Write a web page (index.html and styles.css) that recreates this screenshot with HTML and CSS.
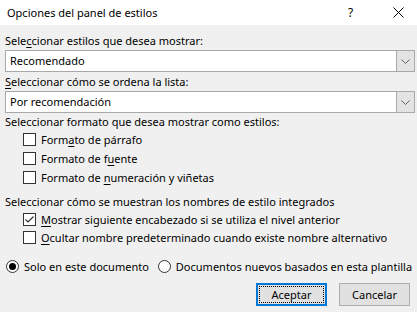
FILE: index.html
```html
<!DOCTYPE html>
<html lang="es">
<head>
<meta charset="utf-8">
<link rel="stylesheet" href="styles.css">
</head>
<body>
<div class="dialog">
  <div class="titlebar">
    <span class="title">Opciones del panel de estilos</span>
    <span class="help">?</span>
    <span class="close"><svg width="11" height="11" viewBox="0 0 11 11"><path d="M0.5 0.5L10.5 10.5M10.5 0.5L0.5 10.5" stroke="#000" stroke-width="1" fill="none"/></svg></span>
  </div>
  <div class="content">
    <div class="label l1">Sele<u>c</u>cionar estilos que desea mostrar:</div>
    <div class="combo">
      <span class="combo-text">Recomendado</span>
      <span class="combo-btn"><svg width="9" height="5" viewBox="0 0 9 5"><path d="M0.5 0.5L4.5 4.5L8.5 0.5" stroke="#606060" fill="none"/></svg></span>
    </div>
    <div class="label l2"><u>S</u>eleccionar cómo se ordena la lista:</div>
    <div class="combo">
      <span class="combo-text">Por recomendación</span>
      <span class="combo-btn"><svg width="9" height="5" viewBox="0 0 9 5"><path d="M0.5 0.5L4.5 4.5L8.5 0.5" stroke="#606060" fill="none"/></svg></span>
    </div>
    <div class="label l3">Seleccionar formato que desea mostrar como estilos:</div>
    <div class="checks c1">
      <div class="check-row"><span class="box"></span><span>Form<u>a</u>to de párrafo</span></div>
      <div class="check-row"><span class="box"></span><span>Formato de f<u>u</u>ente</span></div>
      <div class="check-row"><span class="box"></span><span>Formato de <u>n</u>umeración y viñetas</span></div>
    </div>
    <div class="label l4">Seleccionar cómo se muestran los nombres de estilo integrados</div>
    <div class="checks c2">
      <div class="check-row short"><span class="box"><svg width="11" height="11" viewBox="0 0 11 11"><path d="M1.5 5.5L4 8L9.5 2.5" stroke="#333" stroke-width="1.2" fill="none"/></svg></span><span><u>M</u>ostrar siguiente encabezado si se utiliza el nivel anterior</span></div>
      <div class="check-row short"><span class="box"></span><span><u>O</u>cultar nombre predeterminado cuando existe nombre alternativo</span></div>
    </div>
    <div class="radios">
      <div class="radio-item"><span class="radio on"></span><span>Solo en este documento</span></div>
      <div class="radio-item"><span class="radio"></span><span>Documentos nuevos basados en esta plantilla</span></div>
    </div>
    <div class="buttons">
      <button class="btn default"><span class="focus">Aceptar</span></button>
      <button class="btn">Cancelar</button>
    </div>
  </div>
</div>
</body>
</html>
```
FILE: styles.css
```css
html, body {
  margin: 0;
  padding: 0;
}
body {
  width: 417px;
  height: 312px;
  background: #f0f0f0;
  font-family: "Noto Sans", "Open Sans", sans-serif;
  font-size: 11px;
  color: #000;
  overflow: hidden;
}
.dialog {
  display: flex;
  flex-direction: column;
  width: 417px;
  height: 312px;
}
.titlebar {
  height: 25px;
  background: #fff;
  display: flex;
  align-items: center;
  padding-left: 7px;
  box-sizing: border-box;
}
.title {
  flex: 1;
  font-size: 11px;
  line-height: 16px;
}
.help {
  width: 10px;
  margin-right: 35px;
  font-size: 12px;
  line-height: 16px;
}
.close {
  display: flex;
  width: 11px;
  margin-right: 13px;
}
.content {
  display: flex;
  flex-direction: column;
  padding: 0 2px 0 5px;
}
u {
  text-decoration: underline;
  text-underline-offset: 2px;
}
.label {
  line-height: 16px;
  height: 16px;
  white-space: nowrap;
}
.l1 { margin-top: 8px; margin-bottom: 1px; }
.l2 { margin-top: 2px; margin-bottom: 1px; }
.l3 { margin-top: 1px; }
.l4 { margin-top: 7px; }
.combo {
  height: 22px;
  box-sizing: border-box;
  border: 1px solid #a8a8a8;
  background: #fff;
  display: flex;
  align-items: stretch;
}
.combo-text {
  flex: 1;
  padding-left: 4px;
  line-height: 20px;
}
.combo-btn {
  width: 17px;
  background: #e3e3e3;
  border-left: 1px solid #a8a8a8;
  display: flex;
  align-items: center;
  justify-content: center;
}
.checks {
  display: flex;
  flex-direction: column;
  padding-left: 18px;
}
.check-row {
  height: 19px;
  display: flex;
  align-items: center;
  gap: 5px;
  white-space: nowrap;
}
.check-row.short {
  height: 18px;
}
.box {
  width: 13px;
  height: 13px;
  box-sizing: border-box;
  border: 1px solid #333;
  background: #fff;
  display: flex;
  align-items: center;
  justify-content: center;
  flex: none;
}
.radios {
  margin-top: 11px;
  height: 18px;
  display: flex;
  align-items: center;
  gap: 9px;
  padding-left: 1px;
  white-space: nowrap;
}
.radio-item {
  display: flex;
  align-items: center;
  gap: 5px;
}
.radio {
  width: 13px;
  height: 13px;
  box-sizing: border-box;
  border: 1px solid #333;
  border-radius: 50%;
  background: #fff;
  display: flex;
  align-items: center;
  justify-content: center;
  flex: none;
}
.radio.on::after {
  content: "";
  width: 7px;
  height: 7px;
  border-radius: 50%;
  background: #000;
}
.buttons {
  margin-top: 8px;
  display: flex;
  justify-content: flex-end;
  gap: 12px;
  padding-right: 5px;
}
.btn {
  width: 71px;
  height: 23px;
  box-sizing: border-box;
  border: 1px solid #adadad;
  background: #e1e1e1;
  font-family: inherit;
  font-size: 11px;
  color: #000;
  padding: 0;
  display: flex;
  align-items: center;
  justify-content: center;
}
.btn.default {
  border: 2px solid #0078d7;
  padding: 1px;
}
.focus {
  flex: 1;
  align-self: stretch;
  border: 1px dotted #000;
  display: flex;
  align-items: center;
  justify-content: center;
}
```
